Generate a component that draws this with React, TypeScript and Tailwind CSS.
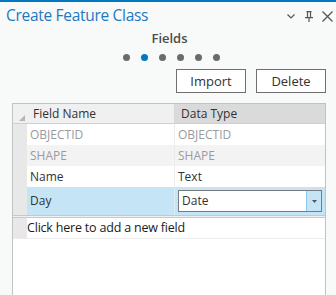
const ROWS = [
  { name: 'OBJECTID', type: 'OBJECTID', muted: true, bg: 'bg-white' },
  { name: 'SHAPE', type: 'SHAPE', muted: true, bg: 'bg-[#f3f3f3]' },
  { name: 'Name', type: 'Text', muted: false, bg: 'bg-white' },
]

function TitleIcons() {
  return (
    <div className="ml-auto flex items-center">
      <svg width="8" height="5" viewBox="0 0 8 5" fill="none" stroke="#555" strokeWidth="1.2">
        <path d="M0.5 0.5L4 4L7.5 0.5" />
      </svg>
      <svg className="ml-[10px]" width="8" height="11" viewBox="0 0 8 11" fill="none" stroke="#555" strokeWidth="1.2">
        <path d="M1.5 0.6h5M2.5 0.6v6M5.5 0.6v6M0 6.6h8M4 6.6v4.4" />
      </svg>
      <svg className="ml-[9px]" width="11" height="11" viewBox="0 0 11 11" fill="none" stroke="#555" strokeWidth="1.3">
        <path d="M0.5 0.5L10.5 10.5M10.5 0.5L0.5 10.5" />
      </svg>
    </div>
  )
}

export default function App() {
  return (
    <div
      className="w-[336px] h-[295px] overflow-hidden bg-[#f8f9f9] border-t-2 border-[#0079c1] flex flex-col"
      style={{ fontFamily: '"Open Sans", "Noto Sans", sans-serif' }}
    >
      {/* title bar */}
      <div className="flex items-center h-[28px] pl-[6px] pr-[3px]">
        <span className="text-[15.5px] text-[#1b7ac0] tracking-[-0.3px] leading-none">Create Feature Class</span>
        <TitleIcons />
      </div>

      {/* page indicator */}
      <div className="flex flex-col items-center pl-[3px]">
        <span className="text-[13px] font-semibold text-[#4c4c4c] leading-[16px]">Fields</span>
        <div className="flex gap-[11px] mt-[8px] ml-[3px]">
          {[0, 1, 2, 3, 4, 5].map((i) => (
            <span
              key={i}
              className={`w-[7px] h-[7px] rounded-full ${i === 1 ? 'bg-[#0079c1]' : 'bg-[#6b6b6b]'}`}
            />
          ))}
        </div>
      </div>

      {/* buttons */}
      <div className="flex justify-end gap-[10px] pr-[10px] mt-[8px]">
        <button className="w-[70px] h-[24px] bg-white border border-[#6e6e6e] text-[13px] text-[#323232] leading-none">
          Import
        </button>
        <button className="w-[70px] h-[24px] bg-white border border-[#6e6e6e] text-[13px] text-[#323232] leading-none">
          Delete
        </button>
      </div>

      {/* table */}
      <div className="ml-[12px] mr-[10px] mt-[10px] flex-1 bg-white border-l border-r border-t border-[#c2c2c2] text-[12px] text-[#323232]">
        {/* header */}
        <div className="grid grid-cols-[14px_148px_1fr] h-[20px] border-b border-[#d0d0d0]">
          <div className="bg-[#f0f0f0] flex items-end justify-end pr-[2px] pb-[2px]">
            <svg width="6" height="6" viewBox="0 0 6 6">
              <path d="M6 0L6 6L0 6Z" fill="#b5b5b5" />
            </svg>
          </div>
          <div className="bg-[#f0f0f0] flex items-center pl-[6px] text-[#323232] border-r border-[#d8d8d8]">
            Field Name
          </div>
          <div className="bg-[#dadada] flex items-center pl-[6px] text-[#323232]">Data Type</div>
        </div>

        {ROWS.map((r) => (
          <div key={r.name} className="grid grid-cols-[14px_148px_1fr] h-[21px]">
            <div className="bg-[#e8e8e8]" />
            <div className={`${r.bg} flex items-center pl-[3px] border-r border-[#ececec] ${r.muted ? 'text-[#9b9b9b]' : ''}`}>
              {r.name}
            </div>
            <div className={`${r.bg} flex items-center pl-[3px] ${r.muted ? 'text-[#9b9b9b]' : ''}`}>{r.type}</div>
          </div>
        ))}

        {/* selected row */}
        <div className="grid grid-cols-[14px_148px_1fr] h-[28px]">
          <div className="bg-[#e8e8e8]" />
          <div className="bg-[#c5e5f7] flex items-center pl-[3px] border-r border-[#d8eef9]">Day</div>
          <div className="bg-[#c5e5f7] flex items-center px-[3px]">
            <div className="flex-1 h-[22px] bg-white border border-[#7a7a7a] flex items-center">
              <span className="pl-[3px] flex-1">Date</span>
              <span className="w-[15px] h-full bg-[#c5e5f7] border-l border-[#8fc7ea] flex items-center justify-center">
                <svg width="5" height="3" viewBox="0 0 5 3">
                  <path d="M0 0H5L2.5 3Z" fill="#555" />
                </svg>
              </span>
            </div>
          </div>
        </div>

        <div className="h-[3px] border-t border-b border-[#c8c8c8] bg-[#f0f0f0]" />

        {/* new field row */}
        <div className="grid grid-cols-[14px_1fr] h-[21px] border-b border-[#ececec]">
          <div className="bg-[#e8e8e8]" />
          <div className="flex items-center text-[12.5px] tracking-[-0.2px] text-[#1a1a1a]">
            Click here to add a new field
          </div>
        </div>
      </div>
    </div>
  )
}
